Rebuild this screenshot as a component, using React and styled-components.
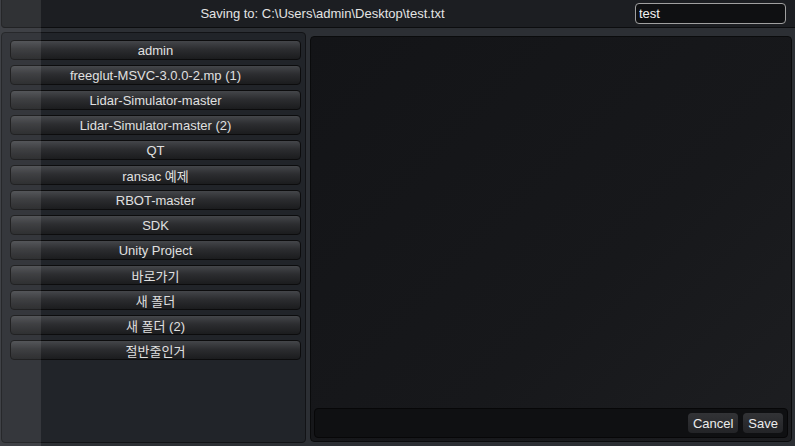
import React from 'react';
import styled, { createGlobalStyle } from 'styled-components';

const GlobalStyle = createGlobalStyle`
    html, body {
        margin: 0;
        padding: 0;
        background: #2c2f34;
    }
    * {
        box-sizing: border-box;
    }
`;

const Window = styled.div`
    position: relative;
    width: 795px;
    height: 446px;
    background: #2c2f34;
    display: flex;
    flex-direction: column;
    font-family: "Liberation Sans", Arial, "Noto Sans CJK KR", sans-serif;
    font-size: 13px;
    color: #e2e2e2;
    overflow: hidden;
`;

// lighter band on the left edge of the window, over everything
const Stripe = styled.div`
    position: absolute;
    left: 0;
    top: 0;
    width: 41px;
    height: 100%;
    background: rgba(255, 255, 255, 0.09);
    pointer-events: none;
`;

const TopBar = styled.div`
    height: 28px;
    margin: 0 0 0 1px;
    display: flex;
    align-items: center;
    padding: 0 9px 0 0;
    background: #1c1e22;
    border-bottom: 1px solid #0c0d0f;
    border-left: 1px solid #111214;
    border-bottom-left-radius: 4px;
`;

const PathText = styled.div`
    flex: 1;
    text-align: center;
    padding-left: 8px;
    color: #e4e4e4;
`;

const NameInput = styled.input`
    width: 151px;
    height: 21px;
    margin-top: -1px;
    padding: 0 3px;
    background: #0f1012;
    border: 1px solid #a0a0a0;
    border-radius: 4px;
    color: #f2f2f2;
    font-family: inherit;
    font-size: 13px;
    outline: none;
`;

const Body = styled.div`
    flex: 1;
    display: flex;
    gap: 4px;
    padding: 4px 3px 3px 1px;
`;

const FolderPanel = styled.div`
    width: 305px;
    display: flex;
    flex-direction: column;
    gap: 5px;
    padding: 7px 4px 0 8px;
    background: #212429;
    border: 1px solid #121316;
    border-radius: 4px;
`;

const FolderButton = styled.div`
    height: 20px;
    display: flex;
    align-items: center;
    justify-content: center;
    background: linear-gradient(#44464a 0%, #2c2d30 45%, #1b1c1e 100%);
    border: 1px solid #0c0c0d;
    border-radius: 4px;
    color: #e0e0e0;
    white-space: nowrap;
`;

const ContentPanel = styled.div`
    flex: 1;
    margin-top: 4px;
    margin-bottom: 1px;
    display: flex;
    flex-direction: column;
    justify-content: flex-end;
    padding: 0 3px 3px 3px;
    background: linear-gradient(135deg, #131417 0%, #17181b 60%, #1d1e21 100%);
    border: 1px solid #0a0b0c;
    border-radius: 4px;
`;

const ActionBar = styled.div`
    height: 30px;
    display: flex;
    align-items: center;
    justify-content: flex-end;
    gap: 5px;
    padding-right: 4px;
    background: #0f1012;
    border: 1px solid #070708;
    border-radius: 4px;
`;

const ActionButton = styled.div`
    height: 20px;
    padding: 0 5px;
    display: flex;
    align-items: center;
    background: linear-gradient(#323336, #232427);
    border-radius: 4px;
    color: #ececec;
`;

const folders = [
    'admin',
    'freeglut-MSVC-3.0.0-2.mp (1)',
    'Lidar-Simulator-master',
    'Lidar-Simulator-master (2)',
    'QT',
    'ransac 예제',
    'RBOT-master',
    'SDK',
    'Unity Project',
    '바로가기',
    '새 폴더',
    '새 폴더 (2)',
    '절반줄인거',
];

export default function App() {
    return (
        <>
            <GlobalStyle />
            <Window>
                <TopBar>
                    <PathText>Saving to: C:\Users\admin\Desktop\test.txt</PathText>
                    <NameInput defaultValue="test" />
                </TopBar>
                <Body>
                    <FolderPanel>
                        {folders.map(name => (
                            <FolderButton key={name}>{name}</FolderButton>
                        ))}
                    </FolderPanel>
                    <ContentPanel>
                        <ActionBar>
                            <ActionButton>Cancel</ActionButton>
                            <ActionButton>Save</ActionButton>
                        </ActionBar>
                    </ContentPanel>
                </Body>
                <Stripe />
            </Window>
        </>
    );
}
